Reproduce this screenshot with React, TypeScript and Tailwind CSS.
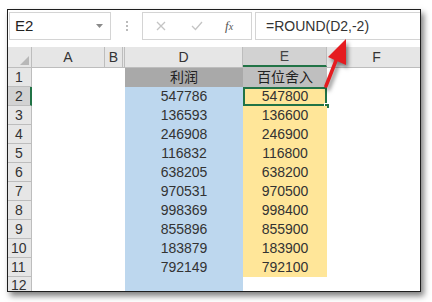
import React from 'react';

const ROWS: [string, string][] = [
  ['547786', '547800'],
  ['136593', '136600'],
  ['246908', '246900'],
  ['116832', '116800'],
  ['638205', '638200'],
  ['970531', '970500'],
  ['998369', '998400'],
  ['855896', '855900'],
  ['183879', '183900'],
  ['792149', '792100'],
];

const font = { fontFamily: '"Liberation Sans", "Noto Sans CJK SC", sans-serif' };

const App: React.FC = () => {
  return (
    <div className="relative w-[432px] h-[302px] bg-white overflow-hidden" style={font}>
      <div className="pl-[7px] pt-[9px]">
        <div className="w-[414px] h-[283px] border border-[#1e1e1e] bg-white overflow-hidden shadow-[3px_4px_6px_rgba(0,0,0,0.5)]">
          {/* formula bar */}
          <div className="h-[37px] flex items-start pt-[2px]">
            <div className="ml-[1px] w-[102px] h-[28px] border border-[#d4d4d4] flex items-center pl-[5px] pr-[7px] text-[15px] text-[#222]">
              <span className="flex-1">E2</span>
              <svg width="7" height="4" viewBox="0 0 7 4"><path d="M0 0 L7 0 L3.5 4 Z" fill="#8a8a8a" /></svg>
            </div>
            <div className="w-[31px] h-[28px] flex flex-col items-center justify-center gap-[2px]">
              <div className="w-[2px] h-[2px] bg-[#bbb]" />
              <div className="w-[2px] h-[2px] bg-[#bbb]" />
              <div className="w-[2px] h-[2px] bg-[#bbb]" />
            </div>
            <div className="w-[110px] h-[28px] border border-[#d4d4d4] flex items-center">
              <svg className="ml-[13px]" width="10" height="10" viewBox="0 0 10 10">
                <path d="M1 1 L9 9 M9 1 L1 9" stroke="#c4c4c4" strokeWidth="1.3" />
              </svg>
              <svg className="ml-[25px]" width="12" height="10" viewBox="0 0 12 10">
                <path d="M1 5 L4.5 8.5 L11 1" stroke="#c4c4c4" strokeWidth="1.3" fill="none" />
              </svg>
              <span className="ml-[22px] text-[13px] italic text-[#555]" style={{ fontFamily: '"Liberation Serif", serif' }}>
                f<span className="text-[10px]">x</span>
              </span>
            </div>
            <div className="ml-[3px] flex-1 h-[28px] border border-r-0 border-[#d4d4d4] flex items-center pl-[10px] text-[14px] text-[#333]">
              =ROUND(D2,-2)
            </div>
          </div>

          {/* column headers */}
          <div className="h-[21px] flex bg-[#e6e6e6] border-b border-[#bdbdbd] text-[14px] text-[#333]">
            <div className="w-[24px] border-r border-[#bdbdbd] flex items-end justify-end pr-[2px] pb-[2px]">
              <svg width="9" height="9" viewBox="0 0 9 9"><path d="M9 0 L9 9 L0 9 Z" fill="#b8b8b8" /></svg>
            </div>
            <div className="w-[73px] border-r border-[#bdbdbd] flex items-center justify-center">A</div>
            <div className="w-[18px] border-r border-[#bdbdbd] flex items-center justify-center">B</div>
            <div className="w-[2px] border-r border-[#bdbdbd]" />
            <div className="w-[118px] border-r border-[#bdbdbd] flex items-center justify-center">D</div>
            <div className="w-[84px] bg-[#d2d2d2] border-b-2 border-[#217346] border-r border-r-[#bdbdbd] flex items-center justify-center text-[#444]">E</div>
            <div className="flex-1 flex items-center justify-center pl-[6px]">F</div>
          </div>

          {/* row 1 */}
          <div className="h-[19px] flex text-[14px]">
            <div className="w-[24px] bg-[#e6e6e6] border-r border-b border-[#bdbdbd] flex items-center pl-[7px] text-[#333]">1</div>
            <div className="w-[93px]" />
            <div className="w-[118px] bg-[#a9a9a9] flex items-center justify-center text-[#222]">利润</div>
            <div className="w-[84px] bg-[#bfbfbf] flex items-center justify-center text-[#222]">百位舍入</div>
            <div className="flex-1" />
          </div>

          {ROWS.map(([d, e], i) => {
            const n = i + 2;
            const sel = n === 2;
            return (
              <div key={n} className="h-[19px] flex text-[14px]">
                <div
                  className={`w-[24px] border-b border-[#bdbdbd] flex items-center pl-[3px] text-[#333] ${
                    sel ? 'bg-[#d2d2d2] border-r-2 border-r-[#217346]' : 'bg-[#e6e6e6] border-r'
                  }`}
                >
                  <span className={n < 10 ? 'pl-[4px]' : ''}>{n}</span>
                </div>
                <div className="w-[93px]" />
                <div className="w-[118px] bg-[#bdd7ee] flex items-center justify-center text-[#333]">{d}</div>
                <div
                  className={`relative w-[84px] bg-[#ffe699] flex items-center justify-center text-[#333] ${
                    sel ? 'border-2 border-[#217346]' : ''
                  }`}
                >
                  {e}
                  {sel && (
                    <div className="absolute right-[-5px] bottom-[-5px] w-[6px] h-[6px] bg-[#217346] border border-white" />
                  )}
                </div>
                <div className="flex-1" />
              </div>
            );
          })}

          {/* row 12 */}
          <div className="h-[19px] flex text-[14px]">
            <div className="w-[24px] bg-[#e6e6e6] border-r border-[#bdbdbd] flex items-start pt-[1px] pl-[3px] text-[#333] leading-[14px]">12</div>
            <div className="w-[93px]" />
            <div className="w-[118px] bg-[#bdd7ee]" />
            <div className="flex-1" />
          </div>
        </div>
      </div>

      {/* red arrow */}
      <svg
        className="absolute left-0 top-0 pointer-events-none"
        width="432"
        height="302"
        style={{ filter: 'drop-shadow(2px 3px 2px rgba(0,0,0,0.5))' }}
      >
        <path d="M326 86 L337 58" stroke="#e51b1f" strokeWidth="3.5" strokeLinecap="round" />
        <path d="M346 39 L346 65 L328 57 Z" fill="#e51b1f" />
      </svg>
    </div>
  );
};

export default App;
